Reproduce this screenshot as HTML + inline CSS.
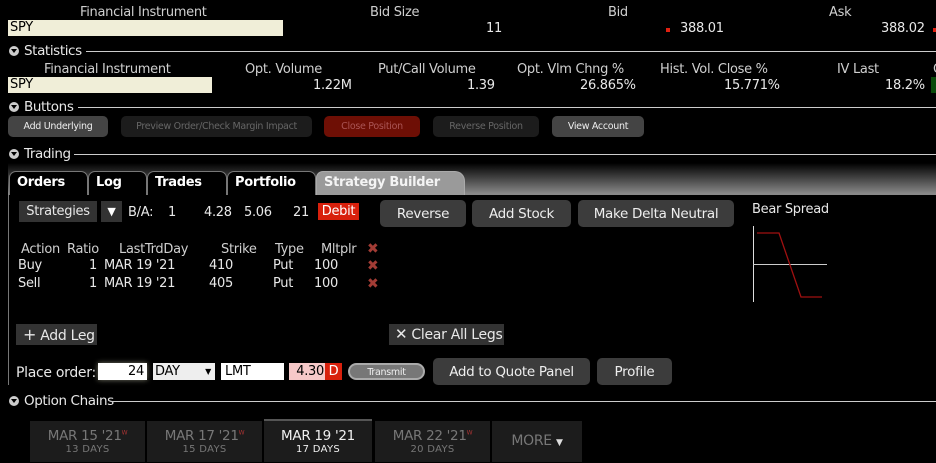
<!DOCTYPE html>
<html><head><meta charset="utf-8"><style>
*{margin:0;padding:0;box-sizing:border-box}
body{width:936px;height:462px;background:#000;color:#e8e8e8;font-family:"DejaVu Sans","Liberation Sans",sans-serif;font-size:13px;position:relative;overflow:hidden;letter-spacing:-0.3px}
.a{position:absolute;white-space:nowrap}
.hdr{color:#cfcfcf}
.cream{position:absolute;background:#f0eed8;color:#000;padding-left:2px;line-height:16px;font-size:13px}
.sec{position:absolute;left:0;width:936px;height:14px}
.sec .ic{position:absolute;left:9px;top:2px;width:10px;height:10px;border-radius:50%;background:#ccc}
.sec .ic:after{content:"";position:absolute;left:2px;top:3px;border-left:3px solid transparent;border-right:3px solid transparent;border-top:4px solid #000}
.sec .t{position:absolute;left:24px;top:-1px;font-size:13.5px;color:#e8e8e8;letter-spacing:-0.4px}
.sec .l{position:absolute;top:7px;right:0;height:1px;background:#ccc}
.sb{position:absolute;height:21px;border-radius:5px;font-size:9.5px;text-align:center;line-height:21px;top:116px}
.btn{position:absolute;background:#3c3c3c;border-radius:5px;text-align:center;color:#eee;font-size:13.5px;line-height:28px;height:27px}
.tab{position:absolute;top:171px;height:24px;border:1px solid #777;border-bottom:none;border-radius:7px 7px 0 0;background:#000;color:#fff;font-weight:bold;font-size:13px;padding-left:7px;line-height:21px}
.x{color:#a33c35;font-weight:bold;font-size:14px}
.dt{position:absolute;top:421px;height:41px;background:#1c1c1c;text-align:center;color:#777;font-size:13.5px}
.dt b{display:block;font-weight:normal;margin-top:7px}
.dt s{text-decoration:none;display:block;font-size:10px;margin-top:0px;letter-spacing:0.3px}
sup{color:#a33;font-size:6px}
</style></head><body>
<div class="a hdr" style="left:80px;top:5px">Financial Instrument</div>
<div class="a hdr" style="left:370px;top:5px">Bid Size</div>
<div class="a hdr" style="left:608px;top:5px">Bid</div>
<div class="a hdr" style="left:829px;top:5px">Ask</div>
<div class="cream" style="left:8px;top:20px;width:275px">SPY</div>
<div class="a" style="left:486px;top:21px">11</div>
<div class="a" style="left:666px;top:28px;width:4px;height:4px;background:#e02010"></div>
<div class="a" style="left:680px;top:21px">388.01</div>
<div class="a" style="left:881px;top:21px">388.02</div>
<div class="a" style="left:933px;top:28px;width:4px;height:4px;background:#e02010"></div>

<div class="sec" style="top:44px"><div class="ic"></div><div class="t">Statistics</div><div class="l" style="left:86px"></div></div>
<div class="a hdr" style="left:44px;top:62px">Financial Instrument</div>
<div class="a hdr" style="left:245px;top:62px">Opt. Volume</div>
<div class="a hdr" style="left:378px;top:62px">Put/Call Volume</div>
<div class="a hdr" style="left:517px;top:62px">Opt. Vlm Chng %</div>
<div class="a hdr" style="left:660px;top:62px">Hist. Vol. Close %</div>
<div class="a hdr" style="left:837px;top:62px">IV Last</div>
<div class="a hdr" style="left:933px;top:62px">O</div>
<div class="cream" style="left:8px;top:77px;width:204px">SPY</div>
<div class="a" style="left:313px;top:78px">1.22M</div>
<div class="a" style="left:467px;top:78px">1.39</div>
<div class="a" style="left:580px;top:78px">26.865%</div>
<div class="a" style="left:724px;top:78px">15.771%</div>
<div class="a" style="left:885px;top:78px">18.2%</div>
<div class="a" style="left:931px;top:77px;width:5px;height:16px;background:#0a4a0a"></div>

<div class="sec" style="top:100px"><div class="ic"></div><div class="t">Buttons</div><div class="l" style="left:78px"></div></div>
<div class="sb" style="left:8px;width:100px;background:#444;color:#eee">Add Underlying</div>
<div class="sb" style="left:121px;width:191px;background:#1c1c1c;color:#666">Preview Order/Check Margin Impact</div>
<div class="sb" style="left:324px;width:96px;background:#6e0f05;color:#a55">Close Position</div>
<div class="sb" style="left:433px;width:106px;background:#1c1c1c;color:#666">Reverse Position</div>
<div class="sb" style="left:552px;width:92px;background:#444;color:#eee">View Account</div>

<div class="sec" style="top:147px"><div class="ic"></div><div class="t">Trading</div><div class="l" style="left:74px"></div></div>

<div class="a" style="left:8px;top:163px;width:928px;height:31px;background:linear-gradient(#000,#8a8a8a)"></div>
<div class="a" style="left:8px;top:193px;width:928px;height:2px;background:#888"></div>
<div class="tab" style="left:9px;width:79px">Orders</div>
<div class="tab" style="left:88px;width:59px">Log</div>
<div class="tab" style="left:147px;width:80px">Trades</div>
<div class="tab" style="left:227px;width:89px">Portfolio</div>
<div class="tab" style="left:316px;width:149px;background:#9a9a9a;border-color:#aaa;color:#f4f4f4;border-radius:7px 10px 0 0">Strategy Builder</div>
<div class="a" style="left:8px;top:195px;width:1px;height:190px;background:#777"></div>

<div class="a" style="left:19px;top:201px;width:78px;height:21px;background:#333;text-align:center;line-height:22px">Strategies</div>
<div class="a" style="left:101px;top:201px;width:21px;height:21px;background:#333;text-align:center;line-height:21px;font-size:11px;color:#fff">▼</div>
<div class="a" style="left:128px;top:205px">B/A:</div>
<div class="a" style="left:168px;top:205px">1</div>
<div class="a" style="left:204px;top:205px">4.28</div>
<div class="a" style="left:244px;top:205px">5.06</div>
<div class="a" style="left:293px;top:205px">21</div>
<div class="a" style="left:318px;top:203px;width:41px;height:17px;background:#d8200c;color:#fff;text-align:center;line-height:18px">Debit</div>
<div class="btn" style="left:380px;top:200px;width:86px">Reverse</div>
<div class="btn" style="left:472px;top:200px;width:99px">Add Stock</div>
<div class="btn" style="left:578px;top:200px;width:156px">Make Delta Neutral</div>
<div class="a" style="left:752px;top:202px">Bear Spread</div>
<svg class="a" style="left:750px;top:225px" width="82" height="80"><line x1="3.5" y1="1" x2="3.5" y2="77" stroke="#ddd"/><line x1="3" y1="39.5" x2="77" y2="39.5" stroke="#ccc"/><polyline points="7,8 29,8 51,72 72,72" fill="none" stroke="#a01010" stroke-width="1.3"/></svg>

<div class="a hdr" style="left:21px;top:242px">Action</div>
<div class="a hdr" style="left:67px;top:242px">Ratio</div>
<div class="a hdr" style="left:119px;top:242px">LastTrdDay</div>
<div class="a hdr" style="left:221px;top:242px">Strike</div>
<div class="a hdr" style="left:275px;top:242px">Type</div>
<div class="a hdr" style="left:321px;top:242px">Mltplr</div>
<div class="a x" style="left:367px;top:241px">✖</div>
<div class="a" style="left:18px;top:258px">Buy</div><div class="a" style="left:89px;top:258px">1</div><div class="a" style="left:104px;top:258px">MAR 19 '21</div><div class="a" style="left:209px;top:258px">410</div><div class="a" style="left:273px;top:258px">Put</div><div class="a" style="left:314px;top:258px">100</div><div class="a x" style="left:367px;top:258px">✖</div>
<div class="a" style="left:18px;top:276px">Sell</div><div class="a" style="left:89px;top:276px">1</div><div class="a" style="left:104px;top:276px">MAR 19 '21</div><div class="a" style="left:209px;top:276px">405</div><div class="a" style="left:273px;top:276px">Put</div><div class="a" style="left:314px;top:276px">100</div><div class="a x" style="left:367px;top:276px">✖</div>

<div class="a" style="left:16px;top:324px;width:81px;height:21px;background:#333;line-height:21px;padding-left:7px;font-size:14px"><span style="font-size:16px">+</span> Add Leg</div>
<div class="a" style="left:389px;top:324px;width:115px;height:21px;background:#333;line-height:21px;padding-left:6px;font-size:14px"><span style="font-size:15px;font-weight:100">✕</span> Clear All Legs</div>

<div class="a" style="left:16px;top:365px;font-size:14px">Place order:</div>
<div class="a" style="left:98px;top:363px;width:49px;height:17px;background:#fff;color:#000;text-align:right;padding-right:3px;line-height:18px;box-shadow:0 0 5px #776">24</div>
<div class="a" style="left:153px;top:363px;width:62px;height:17px;background:#eee;color:#000;padding-left:2px;line-height:18px">DAY<span style="position:absolute;right:4px;font-size:8px">▼</span></div>
<div class="a" style="left:221px;top:363px;width:63px;height:17px;background:#fff;color:#000;padding-left:4px;line-height:18px">LMT</div>
<div class="a" style="left:289px;top:363px;width:36px;height:17px;background:#f6c8c8;color:#000;text-align:right;padding-right:1px;line-height:18px">4.30</div>
<div class="a" style="left:325px;top:363px;width:17px;height:17px;background:#d8200c;color:#fff;text-align:center;line-height:18px">D</div>
<div class="a" style="left:348px;top:363px;width:77px;height:17px;border-radius:9px;background:#777;border:2px solid #aaa;color:#eee;font-size:9.5px;text-align:center;line-height:15px">Transmit</div>
<div class="btn" style="left:433px;top:358px;width:157px">Add to Quote Panel</div>
<div class="btn" style="left:597px;top:358px;width:75px">Profile</div>

<div class="sec" style="top:394px"><div class="ic"></div><div class="t">Option Chains</div><div class="l" style="left:111px"></div></div>

<div class="dt" style="left:30px;width:115px"><b>MAR 15 '21<sup>W</sup></b><s>13 DAYS</s></div>
<div class="dt" style="left:147px;width:115px"><b>MAR 17 '21<sup>W</sup></b><s>15 DAYS</s></div>
<div class="dt" style="left:264px;width:108px;top:419px;height:43px;border-top:2px solid #555;color:#f0f0f0"><b>MAR 19 '21</b><s>17 DAYS</s></div>
<div class="dt" style="left:375px;width:115px"><b>MAR 22 '21<sup>W</sup></b><s>20 DAYS</s></div>
<div class="dt" style="left:492px;width:90px;line-height:40px;font-size:14px">MORE <span style="font-size:9px;color:#ddd">▼</span></div>
</body></html>
